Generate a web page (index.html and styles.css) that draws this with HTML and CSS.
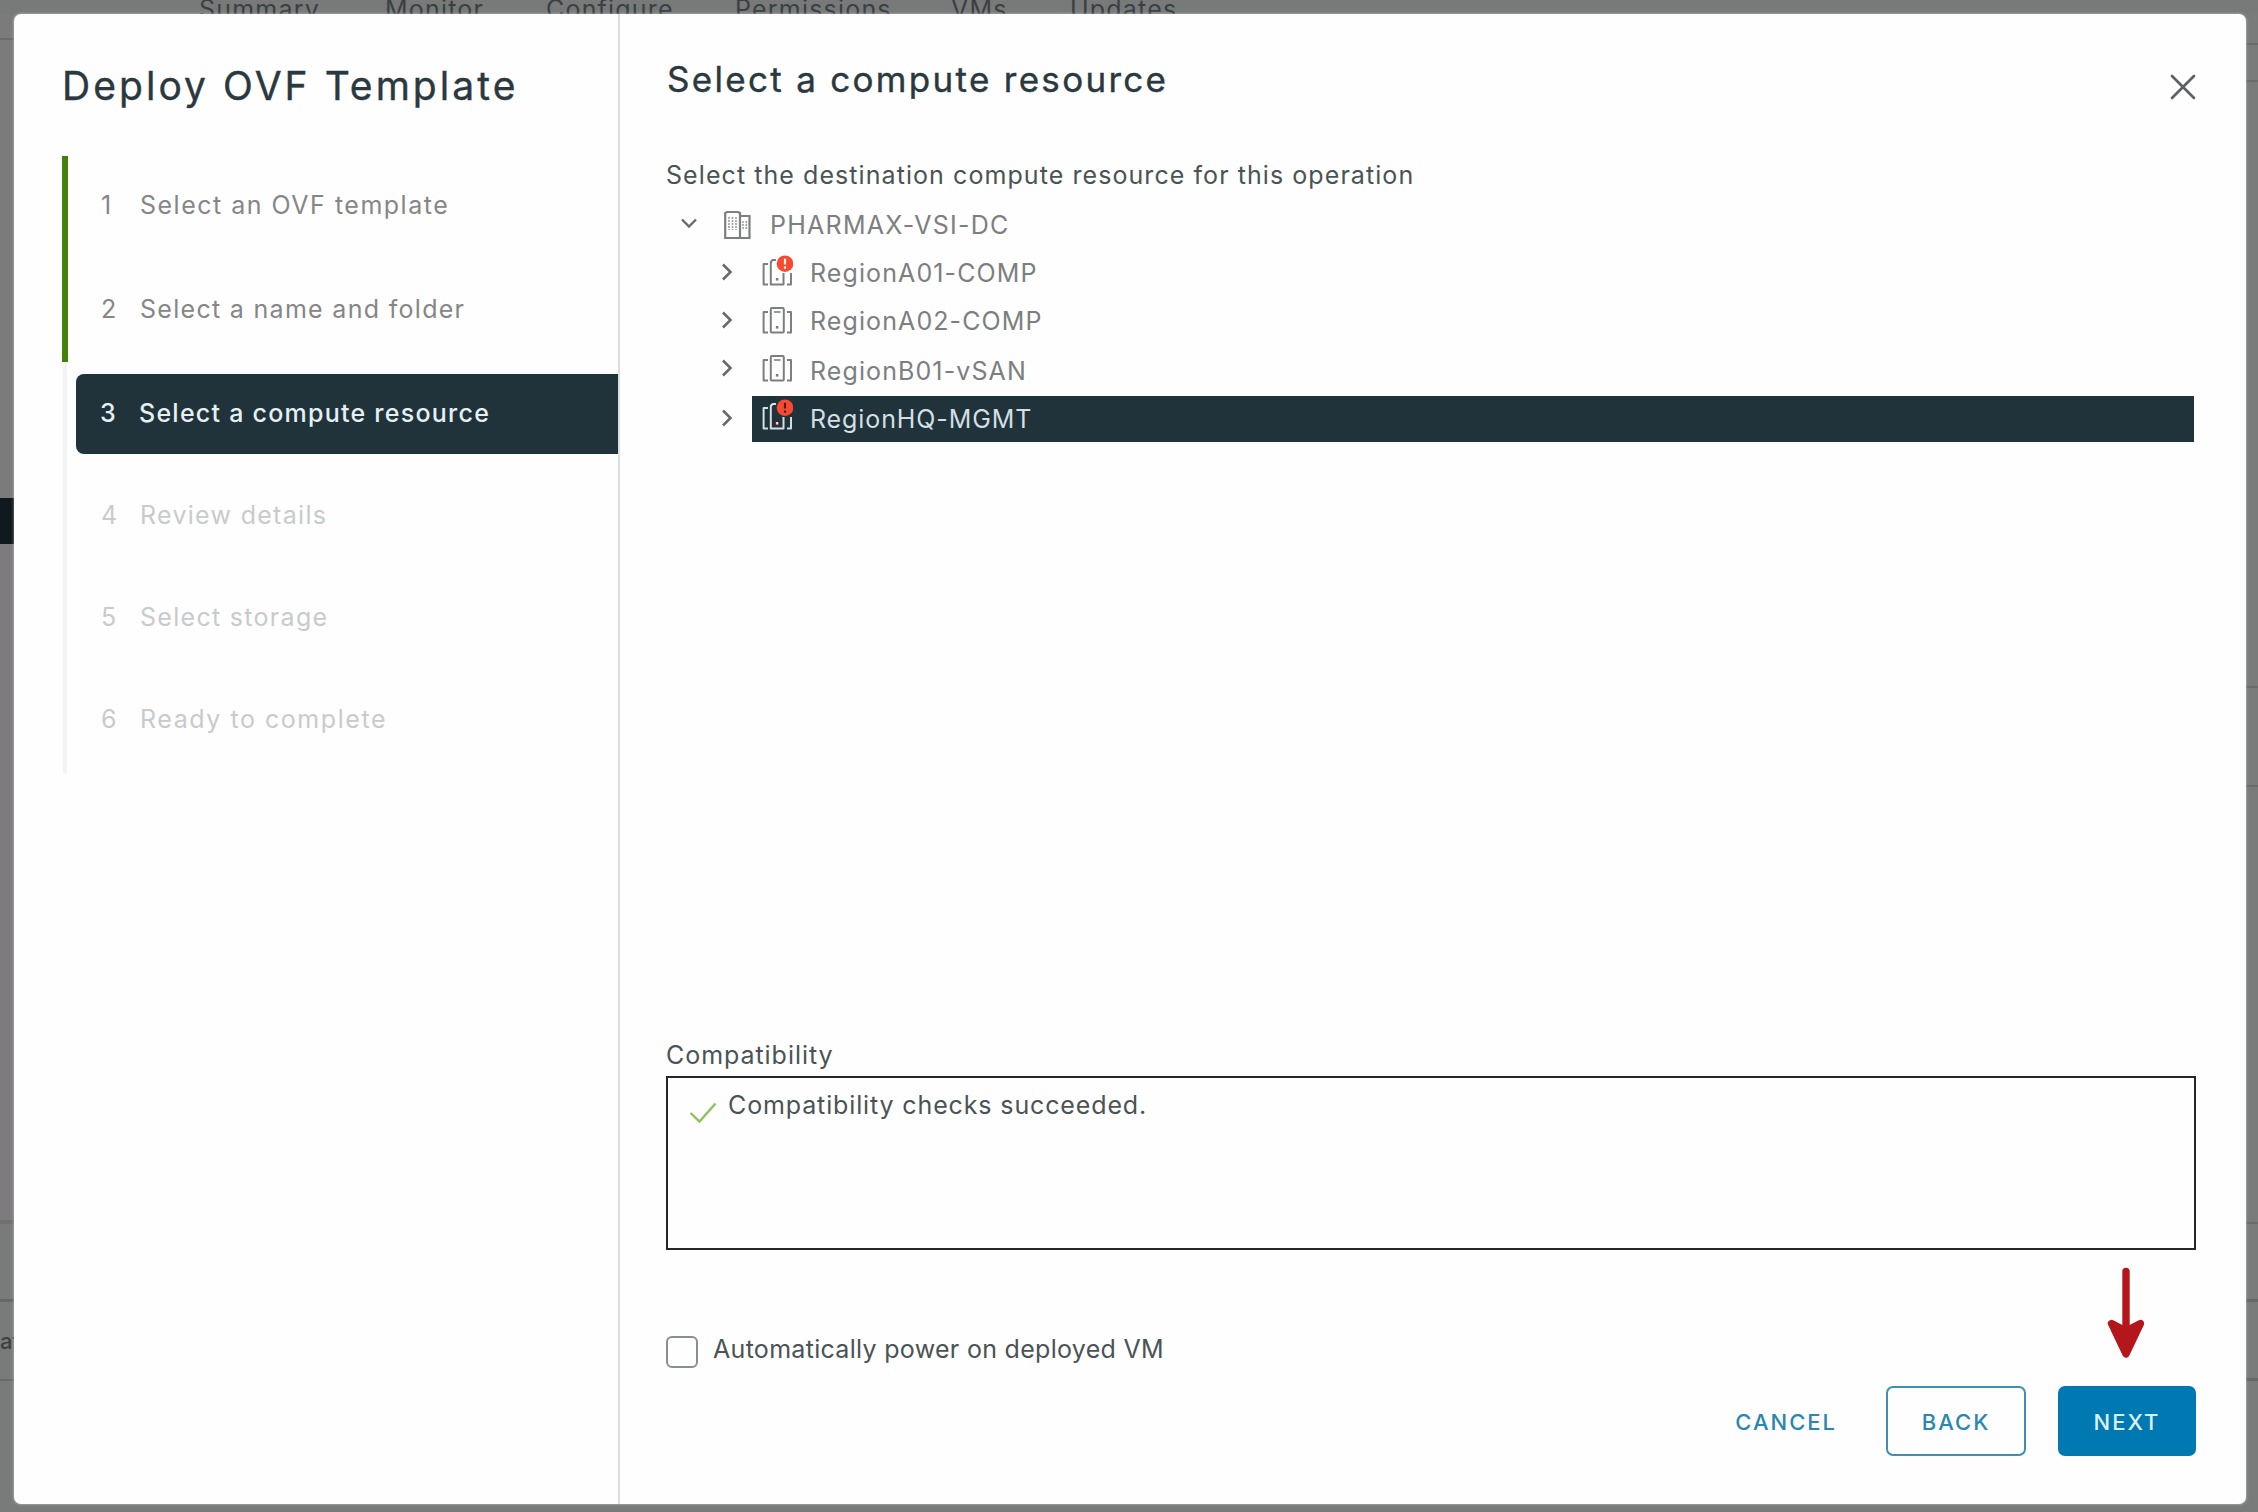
FILE: index.html
```
<!DOCTYPE html>
<html lang="en">
<head>
<meta charset="utf-8">
<title>Deploy OVF Template</title>
<link rel="stylesheet" href="styles.css">
</head>
<body>
<svg class="defs" width="0" height="0" aria-hidden="true">
  <symbol id="chevron-right" viewBox="0 0 16 20"><path d="M4 2.500 L11.500 10 L4 17.500" fill="none" stroke="currentColor" stroke-width="2.6"/></symbol>
  <symbol id="chevron-down" viewBox="0 0 20 16"><path d="M3 4.5 L10 11.5 L17 4.5" fill="none" stroke="currentColor" stroke-width="2.4"/></symbol>
  <symbol id="cluster" viewBox="0 0 32 36">
    <g fill="none" stroke="currentColor" stroke-width="2" stroke-linejoin="round">
      <path d="M7 9 H2.6 V29.5 H7 M26 9 H30 V29.5 H26"/>
      <rect x="9.8" y="5" width="13" height="24.500" rx="1"/>
      <path d="M13 9 H19.5" stroke-width="1.6"/>
    </g>
    <rect x="14.3" y="22.500" width="3.6" height="3.6" fill="currentColor"/>
  </symbol>
  <symbol id="cluster-alert" viewBox="0 0 32 36">
    <g fill="none" stroke="currentColor" stroke-width="2" stroke-linejoin="round">
      <path d="M7 9 H2.6 V29.5 H7 M30 18 V29.5 H26"/>
      <path d="M15 5 H11.5 L9.8 7 V29.500 H22.5 V18"/>
    </g>
    <rect x="14.3" y="22.500" width="3.6" height="3.6" fill="currentColor"/>
    <circle cx="24" cy="8.7" r="8.3" fill="#f84a30" stroke="none"/>
    <path d="M24 3.8 V9.6 M24 11.6 V13.8" fill="none" stroke-width="2.2"/>
  </symbol>
</svg>

<div class="backdrop">
  <nav class="tabs">
    <span class="tab summary">Summary</span>
    <span class="tab monitor">Monitor</span>
    <span class="tab configure">Configure</span>
    <span class="tab permissions">Permissions</span>
    <span class="tab vms">VMs</span>
    <span class="tab updates">Updates</span>
  </nav>
  <div class="page">
    <div class="edge edge-left">
      <div class="l-top"></div><div class="l-head"></div><div class="l-active"></div><div class="l-tree"></div>
      <div class="l-gap"></div><div class="l-cell">at</div><div class="l-rest"></div>
    </div>
    <div class="edge edge-right">
      <div class="r1"></div><div class="r2"></div><div class="r3"></div><div class="r4"></div><div class="r5"></div><div class="r6"></div><div class="r7"></div><div class="r8"></div>
    </div>
  </div>
</div>

<div class="modal">
  <aside class="sidebar">
    <h1 class="title">Deploy OVF Template</h1>
    <ol class="steps">
      <li class="step done s1"><span class="num">1</span><span class="name">Select an OVF template</span></li>
      <li class="step done s2"><span class="num">2</span><span class="name">Select a name and folder</span></li>
      <li class="step current"><div class="pill"><span class="num">3</span><span class="name">Select a compute resource</span></div></li>
      <li class="step todo s4"><span class="num">4</span><span class="name">Review details</span></li>
      <li class="step todo s5"><span class="num">5</span><span class="name">Select storage</span></li>
      <li class="step todo s6"><span class="num">6</span><span class="name">Ready to complete</span></li>
    </ol>
  </aside>

  <main class="content">
    <header class="head">
      <h2 class="heading">Select a compute resource</h2>
      <svg class="close" viewBox="0 0 26 26"><path d="M2 2 L24 24 M24 2 L2 24" fill="none" stroke="currentColor" stroke-width="2.7" stroke-linecap="round"/></svg>
    </header>
    <p class="hint">Select the destination compute resource for this operation</p>

    <ul class="tree">
      <li class="row root">
        <svg class="chev down"><use href="#chevron-down"/></svg>
        <div class="node">
          <svg class="dc" viewBox="0 0 28 30">
            <g fill="none" stroke="currentColor" stroke-width="2.2">
              <path d="M17 28 H2.2 V3 L4 2 H15 L17 3 Z"/>
              <path d="M17 6 H26.5 V28 H17"/>
            </g>
            <g stroke="currentColor" stroke-width="1.6" stroke-dasharray="2 1" opacity=".75">
              <path d="M6 7 V20 M9.5 7 V20 M13 7 V20 M20 11 V20 M23.3 11 V20"/>
            </g>
          </svg>
          <span class="label dc-label">PHARMAX-VSI-DC</span>
        </div>
      </li>
      <li class="row a01">
        <svg class="chev"><use href="#chevron-right"/></svg>
        <div class="node"><svg class="cl"><use href="#cluster-alert"/></svg><span class="label">RegionA01-COMP</span></div>
      </li>
      <li class="row a02">
        <svg class="chev"><use href="#chevron-right"/></svg>
        <div class="node"><svg class="cl"><use href="#cluster"/></svg><span class="label">RegionA02-COMP</span></div>
      </li>
      <li class="row b01">
        <svg class="chev"><use href="#chevron-right"/></svg>
        <div class="node"><svg class="cl"><use href="#cluster"/></svg><span class="label">RegionB01-vSAN</span></div>
      </li>
      <li class="row hq">
        <svg class="chev"><use href="#chevron-right"/></svg>
        <div class="node selected"><svg class="cl"><use href="#cluster-alert"/></svg><span class="label">RegionHQ-MGMT</span></div>
      </li>
    </ul>

    <section class="compat">
      <div class="compat-label">Compatibility</div>
      <div class="compat-box">
        <svg class="tick" viewBox="0 0 28 22"><path d="M1.5 11 L10.5 19.5 L26.5 1.5" fill="none" stroke="currentColor" stroke-width="2.4"/></svg>
        <span class="compat-text">Compatibility checks succeeded.</span>
      </div>
    </section>

    <label class="power"><span class="box"></span><span class="power-text">Automatically power on deployed VM</span></label>

    <footer class="actions">
      <span class="btn cancel">CANCEL</span>
      <span class="btn back">BACK</span>
      <span class="btn next">NEXT</span>
    </footer>
  </main>

  <svg class="pointer" viewBox="0 0 40 94">
    <path d="M20 5.5 V60" stroke="#b3171b" stroke-width="7.4" stroke-linecap="round"/>
    <path d="M5.5 57.5 L20 65 L34.5 57.5 L20 88 Z" fill="#b3171b" stroke="#b3171b" stroke-width="7.4" stroke-linejoin="round"/>
  </svg>
</div>
</body>
</html>
```
FILE: styles.css
```
* { box-sizing: border-box; }
body { margin: 0; width: 2258px; height: 1512px; overflow: hidden; background: #797b7a; font-family: Inter, "Liberation Sans", sans-serif; font-size: 25px; color: #4a5356; }
h1, h2, p, ol, ul { margin: 0; padding: 0; font-weight: 400; list-style: none; }
svg { display: block; flex: none; }
.defs { position: absolute; }

/* dimmed page behind the dialog */
.backdrop { display: flex; flex-direction: column; height: 1512px; }
.tabs { display: flex; height: 14px; padding-left: 199px; background: #787a79; color: #3b4042; }
.tab { height: 18px; line-height: 18px; flex: none; letter-spacing: 1.2px; white-space: nowrap; }
.summary { width: 186px; }
.monitor { width: 161px; }
.configure { width: 189px; }
.permissions { width: 216px; }
.vms { width: 119px; }
.page { display: flex; justify-content: space-between; flex: 1; }
.edge { display: flex; flex-direction: column; width: 20px; }
.edge-left { background: #7b7b7b; }
.l-top { height: 26px; border-bottom: 2px solid #6a6c6b; }
.l-head { height: 458px; }
.l-active { height: 46px; background: #10191e; }
.l-tree { height: 680px; background: #7e7b7e; border-bottom: 4px solid #727172; }
.l-gap { height: 78px; background: #797b7a; border-bottom: 3px solid #666867; }
.l-cell { height: 79px; background: #797b7a; border-bottom: 2px solid #686a69; color: #3b4042; font-size: 22px; font-weight: 500; line-height: 78px; }
.l-rest { flex: 1; background: #797b7a; }
.edge-right > div { border-bottom: 2px solid #6a6c6b; }
.r1 { height: 31px; }
.r2 { height: 37px; }
.r3 { height: 606px; }
.r4 { height: 99px; }
.r5 { height: 437px; }
.edge-right .r6, .edge-right .r7 { border-bottom: 3px solid #666867; }
.r6 { height: 78px; }
.r7 { height: 79px; }
.edge-right .r8 { flex: 1; border: 0; }

.modal { position: absolute; left: 14px; top: 14px; width: 2232px; height: 1490px; display: flex; background: #fefefe; border-radius: 7px; box-shadow: 0 0 3px rgba(220, 228, 226, .7); overflow: hidden; }

.sidebar { width: 606px; flex: none; border-right: 2px solid #d8dfe1; padding: 52px 0 0 48px; }
.title { height: 40px; margin-bottom: 50px; line-height: 40px; font-size: 39px; letter-spacing: 3.05px; color: #2b393e; white-space: nowrap; -webkit-text-stroke: .4px; }
.step { display: flex; align-items: center; padding-left: 34px; border-left: 4px solid #f2f4f4; margin-left: 1px; white-space: nowrap; }
.num { width: 39px; flex: none; }
.done { border-left: 6px solid #43810f; margin-left: 0; padding-left: 33px; color: #868686; }
.todo { color: #c8cbcb; }
.s1 { height: 98px; letter-spacing: 1.5px; }
.s2 { height: 108px; padding-top: 2px; letter-spacing: 1.3px; }
.current { height: 103px; padding-left: 9px; }
.pill { display: flex; align-items: center; flex: 1; height: 80px; padding: 0 0 2px 24px; border-radius: 8px 0 0 8px; background: #20333b; color: #e6eff2; font-weight: 500; letter-spacing: 1.25px; }
.s4 { height: 100px; letter-spacing: 1.3px; }
.s5 { height: 103px; letter-spacing: 1.3px; }
.s6 { height: 105px; padding-bottom: 3px; letter-spacing: 1.55px; }

.content { flex: 1; display: flex; flex-direction: column; padding: 45px 50px 47px 46px; }
.head { display: flex; justify-content: space-between; height: 91px; }
.heading { line-height: 40px; font-size: 35px; letter-spacing: 2.3px; color: #2b393e; margin-left: 1px; -webkit-text-stroke: .4px; }
.close { width: 26px; height: 26px; margin: 15px 0 0; color: #5c6163; }
.hint { height: 50px; line-height: 50px; letter-spacing: 1.07px; }

.tree { display: flex; flex-direction: column; color: #7c7f80; height: 834px; padding-right: 2px; }
.row { display: flex; align-items: stretch; padding-left: 54px; }
.chev { width: 16px; height: 20px; align-self: center; margin: 0 17px 2px -1px; color: #666b6d; }
.node { display: flex; align-items: center; flex: 1; }
.cl { width: 32px; height: 36px; margin: 0 17px 0 9px; stroke: #fff; }
.label { letter-spacing: 1.1px; }
.root { height: 49px; padding-left: 13px; }
.down { width: 20px; height: 16px; margin: 0 20px 4px 0; }
.root .node { padding-left: 4px; }
.dc { width: 28px; height: 30px; margin-right: 19px; }
.dc-label { letter-spacing: 1.25px; }
.a01 { height: 48px; }
.a02 { height: 49px; padding-bottom: 2px; }
.b01 { height: 50px; }
.b01 .chev, .b01 .cl { transform: translateY(-2px); }
.b01 .label { letter-spacing: 1.1px; }
.hq { height: 46px; }
.hq .label { letter-spacing: .9px; }
.selected { background: #20333b; color: #d3dfe3; }
.selected .cl { stroke: #4c1c18; transform: translateY(-2px); }

.compat { height: 216px; }
.compat-label { height: 42px; line-height: 42px; letter-spacing: .95px; }
.compat-box { display: flex; align-items: flex-start; height: 174px; border: 2px solid #262626; padding: 10px 0 0 21px; }
.tick { width: 28px; height: 22px; margin: 14px 11px 0 0; color: #8fc05a; }
.compat-text { line-height: 34px; letter-spacing: .87px; }

.power { display: flex; height: 32px; margin-top: 86px; }
.box { width: 32px; height: 32px; margin-right: 15px; border: 2px solid #8b8e8f; border-radius: 6px; }
.power-text { line-height: 26px; letter-spacing: .3px; }

.actions { display: flex; justify-content: flex-end; margin-top: 18px; }
.btn { display: flex; align-items: center; justify-content: center; height: 70px; padding-top: 2px; border-radius: 7px; font-size: 22px; font-weight: 500; letter-spacing: 2px; color: #2b86b0; }
.cancel { margin-right: 49px; }
.back { width: 140px; margin-right: 32px; border: 2px solid #3f8fb3; }
.next { width: 138px; background: #0079b3; color: #dbf0f9; }

/* callout drawn over the dialog */
.pointer { position: absolute; left: 2092px; top: 1252px; width: 40px; height: 94px; }
```
